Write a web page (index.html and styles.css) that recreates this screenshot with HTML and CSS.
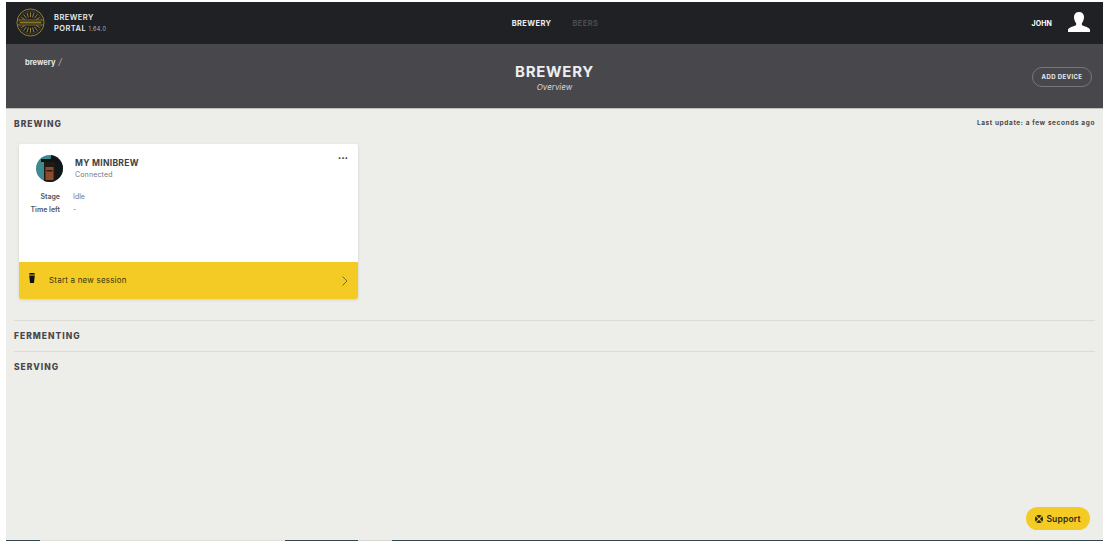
FILE: index.html
```html
<!DOCTYPE html>
<html lang="en">
<head>
<meta charset="utf-8">
<title>Brewery Portal</title>
<link rel="stylesheet" href="styles.css">
</head>
<body>
<div class="app">
  <header class="topbar">
    <div class="brand">
      <svg class="logo" viewBox="0 0 30 30" aria-hidden="true">
        <circle cx="15" cy="15" r="14" fill="none" stroke="#a98f2c" stroke-width=".9"/>
        <circle cx="15" cy="15" r="11.800" fill="none" stroke="#6d5d22" stroke-width=".5"/>
        <g stroke="#a98f2c" stroke-width=".9" fill="none">
          <path d="M15 4.500v5M11.500 5l1.300 4.800M18.500 5l-1.300 4.800M8 6.800l2.700 3.700M22 6.800l-2.700 3.700M5.500 9.800l3.500 2M24.500 9.800l-3.500 2"/>
          <path d="M15 25.500v-5M11.500 25l1.300-4.800M18.500 25l-1.300-4.800M8 23.200l2.700-3.700M22 23.200l-2.700-3.700M5.500 20.200l3.500-2M24.500 20.200l-3.500-2"/>
        </g>
        <path d="M1.500 12.400h27M1.500 17.600h27" stroke="#a98f2c" stroke-width=".7"/>
        <rect x="4" y="14" width="22" height="2" fill="#8c7726"/>
      </svg>
      <div class="brand-text">
        <span>BREWERY</span>
        <span>PORTAL <small class="version">1.64.0</small></span>
      </div>
    </div>
    <nav class="nav">
      <a class="nav-active">BREWERY</a>
      <a class="nav-dim">BEERS</a>
    </nav>
    <div class="user">
      <span class="user-name">JOHN</span>
      <svg class="user-icon" viewBox="0 0 22 20" aria-hidden="true">
        <path fill="#fff" d="M11 0c3.200 0 5 2 5 5 0 2.600-.9 4.700-2.100 6v2.200c2 1 7.100 1.900 8.100 4.300V20H0v-2.500c1-2.400 6.100-3.300 8.100-4.300V11C6.900 9.700 6 7.600 6 5c0-3 1.800-5 5-5z"/>
      </svg>
    </div>
  </header>
  <section class="subbar">
    <div class="crumb"><b>brewery</b> <i>/</i></div>
    <div class="title-block">
      <h1>BREWERY</h1>
      <p>Overview</p>
    </div>
    <div class="sub-action"><button class="add-btn">ADD DEVICE</button></div>
  </section>
  <main class="content">
    <div class="section-head">
      <h2>BREWING</h2>
      <span class="updated">Last update: a few seconds ago</span>
    </div>
    <article class="card">
      <div class="card-body">
        <div class="card-head">
          <svg class="avatar" viewBox="0 0 27 27" aria-hidden="true">
            <clipPath id="av"><circle cx="13.500" cy="13.500" r="13.500"/></clipPath>
            <g clip-path="url(#av)">
              <rect width="27" height="27" fill="#3d8a90"/>
              <path d="M15 0h12v27H13z" fill="#14171a"/>
              <rect x="5" y="4" width="17" height="3" fill="#15130f"/>
              <rect x="8" y="7" width="11" height="20" fill="#1d1a18"/>
              <rect x="9.500" y="12" width="8" height="13" fill="#8f4a2a"/>
              <rect x="10.500" y="15" width="6" height="1.500" fill="#2a1a12"/>
            </g>
          </svg>
          <div class="card-title">
            <h3>MY MINIBREW</h3>
            <p>Connected</p>
          </div>
          <span class="dots">•••</span>
        </div>
        <dl class="stats">
          <dt>Stage</dt><dd>Idle</dd>
          <dt>Time left</dt><dd>-</dd>
        </dl>
      </div>
      <div class="card-foot">
        <svg class="pint" viewBox="0 0 6 10" aria-hidden="true">
          <path fill="#111" d="M.3 0h5.400l-.3 1.500.3 1.500-.7 7H1L.3 3l.3-1.500z"/>
          <rect x=".6" y="1.600" width="4.800" height=".9" fill="#f3cb24"/>
        </svg>
        <span class="foot-label">Start a new session</span>
        <svg class="chev" viewBox="0 0 6 10" aria-hidden="true"><path d="M.5.500 5 5 .5 9.500" fill="none" stroke="#7c6c1c" stroke-width="1"/></svg>
      </div>
    </article>
    <div class="section-row first-row"><h2>FERMENTING</h2></div>
    <div class="section-row"><h2>SERVING</h2></div>
    <div class="support-wrap">
      <button class="support">
        <svg class="lifebuoy" viewBox="0 0 10 10" aria-hidden="true">
          <circle cx="5" cy="5" r="5" fill="#2c2810"/>
          <path d="M1.500 1.500l2 2M8.500 1.500l-2 2M1.500 8.500l2-2M8.500 8.500l-2-2" stroke="#f3cb24" stroke-width="1.300"/>
          <circle cx="5" cy="5" r="1.900" fill="#f3cb24"/>
        </svg>
        Support
      </button>
    </div>
  </main>
  <div class="bottom-line"></div>
</div>
</body>
</html>
```

FILE: styles.css
```css
* { box-sizing: border-box; }
html, body { margin: 0; height: 100%; }
body {
  background: #fff;
  padding: 2px 10px 6px 6px;
  font-family: "Inter", "Liberation Sans", sans-serif;
  overflow: hidden;
}
.app {
  height: 539px;
  display: flex;
  flex-direction: column;
  background: #edede9;
}
.topbar {
  height: 42px;
  flex: none;
  background: #202125;
  display: grid;
  grid-template-columns: 1fr auto 1fr;
  align-items: center;
  padding: 0 12px 0 13px;
  color: #fff;
}
.brand { display: flex; align-items: center; gap: 9px; margin-left: -3px; }
.logo { width: 29px; height: 29px; margin-top: -1px; }
.brand-text {
  display: flex;
  flex-direction: column;
  font-size: 7.500px;
  font-weight: 600;
  line-height: 11px;
  letter-spacing: .45px;
  color: #eceded;
}
.version { font-size: 5.500px; font-weight: 400; letter-spacing: .4px; color: #b5b5b8; }
.nav { display: flex; gap: 21px; font-size: 7.500px; font-weight: 700; letter-spacing: .4px; }
.nav-active { color: #eeeef0; }
.nav-dim { color: #4b4c50; }
.user { display: flex; justify-content: flex-end; align-items: center; gap: 16px; margin-right: 1px; }
.user-name { font-size: 7px; font-weight: 700; letter-spacing: .1px; }
.user-icon { width: 22px; height: 20px; margin-top: -3px; }
.subbar {
  height: 65px;
  flex: none;
  background: #48484c;
  border-bottom: 1px solid #bdbdbb;
  display: grid;
  grid-template-columns: 1fr auto 1fr;
  padding: 0 11px;
  color: #fff;
}
.crumb { font-size: 7.500px; padding: 12px 0 0 8px; color: #e6e6e8; }
.crumb b { font-weight: 700; }
.crumb i { font-weight: 400; font-size: 9px; color: #b5b5b8; margin-left: 1px; }
.title-block { text-align: center; padding-top: 18px; }
.title-block h1 {
  margin: 0;
  font-size: 15px;
  line-height: 19px;
  font-weight: 700;
  letter-spacing: .7px;
  color: #eceef2;
}
.title-block p {
  margin: 1px 0 0;
  font-size: 8px;
  line-height: 11px;
  font-style: italic;
  color: #d6d6d8;
}
.sub-action { display: flex; justify-content: flex-end; align-items: flex-start; padding-top: 23px; }
.add-btn {
  width: 60px;
  height: 20px;
  padding: 0 0 1px;
  border: 1px solid #78787b;
  border-radius: 10px;
  background: transparent;
  color: #ecebec;
  font: 700 6px "Inter", "Liberation Sans", sans-serif;
  letter-spacing: .4px;
}
.content {
  flex: 1;
  display: flex;
  flex-direction: column;
  padding: 0 8px;
  min-height: 0;
}
.section-head {
  height: 30px;
  display: flex;
  justify-content: space-between;
  padding-top: 10px;
  flex: none;
}
h2 {
  margin: 0;
  font-size: 8.500px;
  line-height: 11px;
  font-weight: 800;
  letter-spacing: 1px;
  color: #48484c;
}
.updated {
  font-size: 6.500px;
  line-height: 9px;
  font-weight: 700;
  letter-spacing: .6px;
  color: #4a4a4e;
}
.card {
  width: 339px;
  height: 155px;
  margin: 5px 0 0 5px;
  flex: none;
  display: flex;
  flex-direction: column;
  background: #fff;
  border-radius: 2px;
  box-shadow: 0 1px 3px rgba(0, 0, 0, .12);
  overflow: hidden;
}
.card-body { flex: 1; padding: 11px 10px 0 17px; }
.card-head { display: flex; align-items: flex-start; gap: 12px; }
.avatar { width: 27px; height: 27px; flex: none; }
.card-title { padding-top: 1px; }
.card-head h3 {
  margin: 2px 0 0;
  font-size: 8.500px;
  line-height: 11px;
  font-weight: 700;
  letter-spacing: .3px;
  color: #3e3e42;
}
.card-head p { margin: 1px 0 0; font-size: 7px; line-height: 10px; letter-spacing: .15px; color: #77777b; }
.dots { margin-left: auto; font-size: 5.500px; line-height: 7px; letter-spacing: .2px; color: #333; }
.stats {
  margin: 10px 0 0 -11px;
  display: grid;
  grid-template-columns: 35px 1fr;
  column-gap: 13px;
  row-gap: 4px;
  font-size: 7px;
  line-height: 9px;
}
.stats dt { text-align: right; font-weight: 600; color: #55555a; }
.stats dd { margin: 0; color: #77777b; }
.card-foot {
  height: 37px;
  flex: none;
  background: #f3cb24;
  display: flex;
  align-items: center;
  padding: 0 10px 0 10px;
}
.pint { width: 6px; height: 10px; margin-top: -5px; }
.foot-label { margin: 0 0 1px 14px; font-size: 8px; letter-spacing: .2px; color: #3a3310; flex: 1; }
.chev { width: 6px; height: 10px; margin-top: 1px; }
.section-row {
  height: 30px;
  flex: none;
  border-top: 1px solid #dcdcd7;
  padding-top: 10px;
}
.first-row { margin-top: 21px; height: 31px; }
.support-wrap {
  margin-top: auto;
  padding: 0 5px 10px 0;
  display: flex;
  justify-content: flex-end;
}
.support {
  width: 64px;
  height: 23px;
  border: 0;
  padding: 0;
  border-radius: 12px;
  background: #f3cb24;
  color: #2c2810;
  font: 600 8.500px "Inter", "Liberation Sans", sans-serif;
  letter-spacing: .15px;
  display: flex;
  align-items: center;
  justify-content: center;
  gap: 3px;
}
.lifebuoy { width: 8px; height: 8px; }
.bottom-line {
  height: 1px;
  flex: none;
  background: linear-gradient(90deg,
    #34474f 0 34px, #e0e0dc 34px 279px,
    #34474f 279px 352px, #d4d4d0 352px 386px,
    #34474f 386px);
}
```
